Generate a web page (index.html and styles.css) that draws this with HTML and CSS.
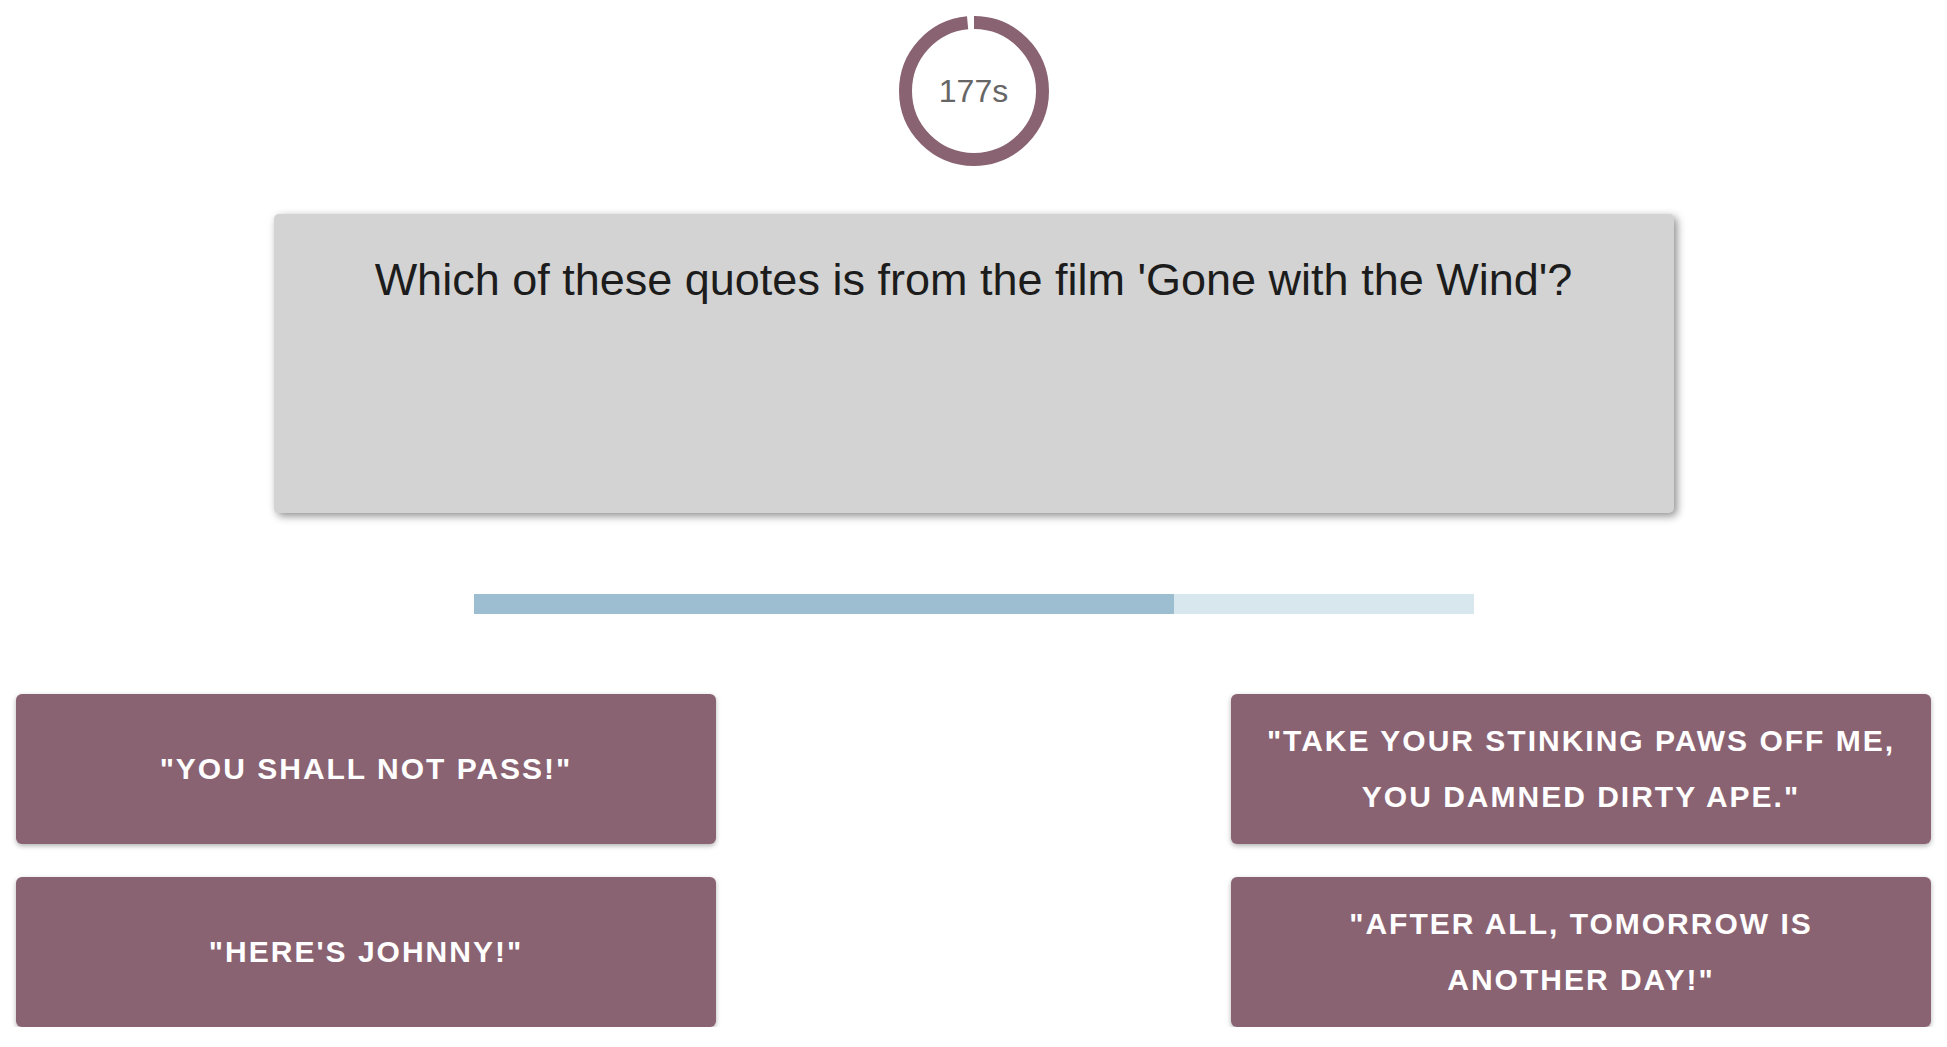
FILE: index.html
```html
<!DOCTYPE html>
<html lang="en">
<head>
<meta charset="utf-8">
<title>Quiz</title>
<link rel="stylesheet" href="styles.css">
</head>
<body>
<div class="timer">
  <svg class="timer-ring" width="150" height="150" viewBox="0 0 150 150">
    <circle cx="75" cy="75" r="68.5" fill="none" stroke="#8a6373" stroke-width="13" stroke-dasharray="423.2 430.4" transform="rotate(-90 75 75)"/>
  </svg>
  <span class="timer-text">177s</span>
</div>
<div class="card">
  <h1 class="question">Which of these quotes is from the film 'Gone with the Wind'?</h1>
</div>
<div class="bar"><div class="bar-fill" style="width:70%"></div></div>
<div class="answers">
  <button class="answer">"You shall not pass!"</button>
  <button class="answer">"Take your stinking paws off me,<br>you damned dirty ape."</button>
  <button class="answer">"Here's Johnny!"</button>
  <button class="answer">"After all, tomorrow is<br>another day!"</button>
</div>
</body>
</html>
```
FILE: styles.css
```css
html, body {
  margin: 0;
  padding: 0;
  background: #ffffff;
  font-family: "Liberation Sans", Arial, sans-serif;
}

.timer {
  width: 150px;
  height: 150px;
  margin: 16px auto 0;
  display: grid;
  place-items: center;
}

.timer-ring,
.timer-text {
  grid-area: 1 / 1;
}

.timer-ring {
  display: block;
}

.timer-text {
  font-size: 32px;
  color: #666666;
  margin-top: 0;
}

.card {
  width: 1400px;
  height: 299px;
  margin: 48px auto 0;
  box-sizing: border-box;
  padding-top: 40px;
  background: #d3d3d3;
  border-radius: 5px;
  box-shadow: 3px 3px 9px rgba(0, 0, 0, 0.45);
}

.question {
  margin: 0;
  font-size: 45px;
  font-weight: normal;
  color: #1c1c1c;
  text-align: center;
  line-height: normal;
}

.bar {
  width: 1000px;
  height: 20px;
  margin: 81px auto 0;
  background: #d8e6ed;
}

.bar-fill {
  height: 100%;
  background: #9dbdd0;
}

.answers {
  margin-top: 80px;
  padding: 0 16px;
  display: grid;
  grid-template-columns: 700px 700px;
  justify-content: space-between;
  row-gap: 33px;
}

.answer {
  height: 150px;
  border: none;
  margin: 0;
  padding: 0 20px;
  display: flex;
  align-items: center;
  justify-content: center;
  text-align: center;
  background: #8a6373;
  border-radius: 6px;
  box-shadow: 0 2px 5px rgba(0, 0, 0, 0.3);
  color: #ffffff;
  font-family: "Liberation Sans", Arial, sans-serif;
  font-weight: bold;
  font-size: 30px;
  letter-spacing: 2px;
  line-height: 56px;
  text-transform: uppercase;
}
```
